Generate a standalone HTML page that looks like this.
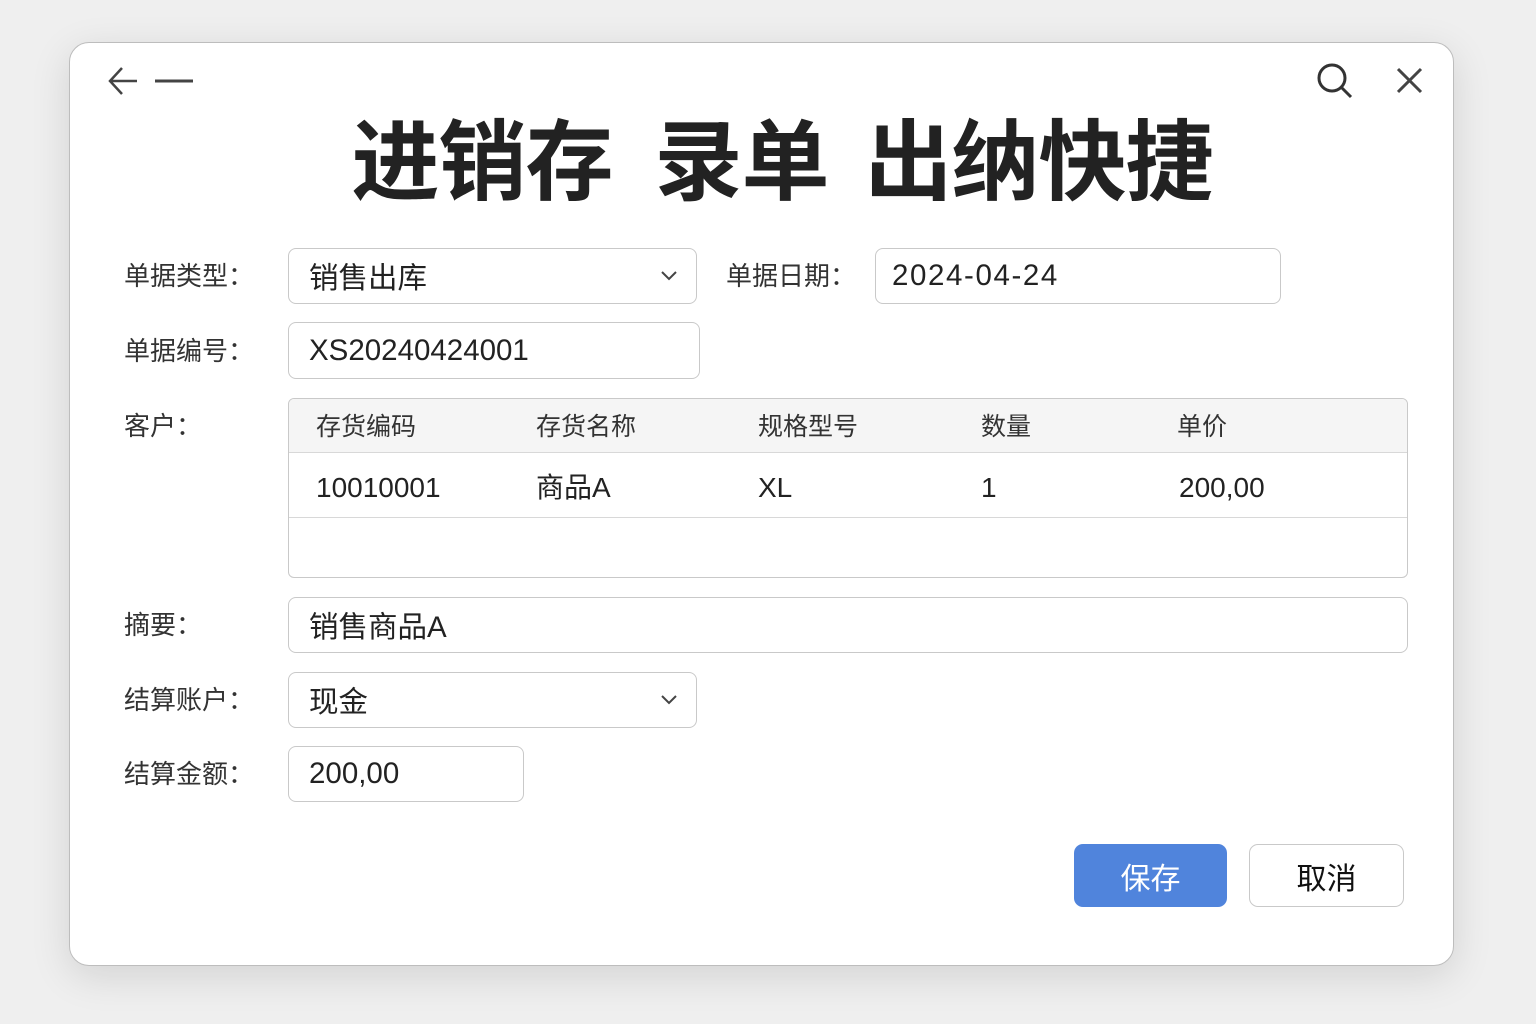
<!DOCTYPE html>
<html><head><meta charset="utf-8"><style>
*{box-sizing:border-box;margin:0;padding:0}
body{width:1536px;height:1024px;background:#efefef;position:relative;overflow:hidden;font-family:"Liberation Sans","Noto Sans CJK SC",sans-serif;color:#2a2a2a}
.win{position:absolute;left:69px;top:42px;width:1385px;height:924px;background:#fff;border-radius:20px;border:1px solid #bdbdbd;box-shadow:0 10px 40px rgba(0,0,0,.12)}
.a{position:absolute}
.lbl{position:absolute;left:124px;font-size:26px;color:#333;line-height:30px}
.box{position:absolute;border:1px solid #c9c9c9;border-radius:8px;background:#fff;font-size:29.5px;padding-left:20px;display:flex;align-items:center;color:#222}
.chev{position:absolute;right:18px;top:50%;margin-top:-6px}
.title{position:absolute;left:14px;width:1536px;top:108px;text-align:center;font-size:88px;font-weight:bold;color:#222;line-height:110px;letter-spacing:-1px}
.tc{position:absolute;font-size:25px;line-height:30px;color:#333}
.td{position:absolute;font-size:28px;line-height:30px;color:#222}
</style></head><body>
<div class="win"></div>
<svg class="a" style="left:100px;top:64px" width="100" height="34"><path d="M22 4 L10 17 L22 30 M10 17 H37" stroke="#444" stroke-width="2.5" fill="none"/><path d="M55 17 H93" stroke="#444" stroke-width="3"/></svg>
<svg class="a" style="left:1312px;top:60px" width="120" height="42"><circle cx="20" cy="18" r="13" stroke="#333" stroke-width="3" fill="none"/><path d="M30 28 L39 37" stroke="#333" stroke-width="3"/><path d="M86 9 L109 32 M109 9 L86 32" stroke="#444" stroke-width="3"/></svg>
<div class="title">进销存<span style="display:inline-block;width:42px"></span>录单<span style="display:inline-block;width:36px"></span>出纳快捷</div>

<div class="lbl" style="top:261px">单据类型：</div>
<div class="box" style="left:288px;top:248px;width:409px;height:56px">销售出库<svg class="chev" width="18" height="12"><path d="M2 2 L9 9 L16 2" stroke="#444" stroke-width="2" fill="none"/></svg></div>
<div class="lbl" style="top:261px;left:726px">单据日期：</div>
<div class="box" style="left:875px;top:248px;width:406px;height:56px;padding-left:16px;letter-spacing:1.6px">2024-04-24</div>

<div class="lbl" style="top:336px">单据编号：</div>
<div class="box" style="left:288px;top:322px;width:412px;height:57px">XS20240424001</div>

<div class="lbl" style="top:411px">客户：</div>
<div class="a" style="left:288px;top:398px;width:1120px;height:180px;border:1px solid #c9c9c9;border-radius:6px;overflow:hidden">
<div class="a" style="left:0;top:0;width:100%;height:54px;background:#f5f5f5;border-bottom:1px solid #d8d8d8"></div>
<div class="a" style="left:0;top:118px;width:100%;height:1px;background:#d8d8d8"></div>
<div class="tc" style="left:27px;top:13px">存货编码</div>
<div class="tc" style="left:247px;top:13px">存货名称</div>
<div class="tc" style="left:469px;top:13px">规格型号</div>
<div class="tc" style="left:692px;top:13px">数量</div>
<div class="tc" style="left:888px;top:13px">单价</div>
<div class="td" style="left:27px;top:74px">10010001</div>
<div class="td" style="left:247px;top:74px">商品A</div>
<div class="td" style="left:469px;top:74px">XL</div>
<div class="td" style="left:692px;top:74px">1</div>
<div class="td" style="left:890px;top:74px">200,00</div>
</div>

<div class="lbl" style="top:610px">摘要：</div>
<div class="box" style="left:288px;top:597px;width:1120px;height:56px">销售商品A</div>

<div class="lbl" style="top:685px">结算账户：</div>
<div class="box" style="left:288px;top:672px;width:409px;height:56px">现金<svg class="chev" width="18" height="12"><path d="M2 2 L9 9 L16 2" stroke="#444" stroke-width="2" fill="none"/></svg></div>

<div class="lbl" style="top:759px">结算金额：</div>
<div class="box" style="left:288px;top:746px;width:236px;height:56px">200,00</div>

<div class="a" style="left:1074px;top:844px;width:153px;height:63px;background:#5084dc;border-radius:9px;color:#fff;font-size:30px;display:flex;align-items:center;justify-content:center">保存</div>
<div class="a" style="left:1249px;top:844px;width:155px;height:63px;background:#fff;border:1px solid #c9c9c9;border-radius:9px;color:#111;font-size:30px;display:flex;align-items:center;justify-content:center">取消</div>
</body></html>
